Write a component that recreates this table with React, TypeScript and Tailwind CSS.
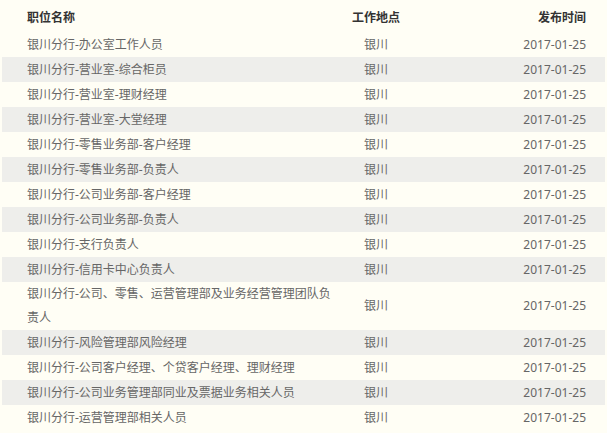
import React from "react";

const rows: string[] = [
  "银川分行-办公室工作人员",
  "银川分行-营业室-综合柜员",
  "银川分行-营业室-理财经理",
  "银川分行-营业室-大堂经理",
  "银川分行-零售业务部-客户经理",
  "银川分行-零售业务部-负责人",
  "银川分行-公司业务部-客户经理",
  "银川分行-公司业务部-负责人",
  "银川分行-支行负责人",
  "银川分行-信用卡中心负责人",
  "银川分行-公司、零售、运营管理部及业务经营管理团队负责人",
  "银川分行-风险管理部风险经理",
  "银川分行-公司客户经理、个贷客户经理、理财经理",
  "银川分行-公司业务管理部同业及票据业务相关人员",
  "银川分行-运营管理部相关人员",
];

export default function App() {
  return (
    <div
      className="min-h-screen w-[607px] bg-[#fffef5] px-[2px] text-[12px] leading-[24px]"
      style={{ fontFamily: '"Noto Sans", "Noto Sans CJK SC", sans-serif' }}
    >
      <div className="grid grid-cols-[338px_72px_1fr] pt-[6px] pb-[2px] font-bold text-[#333]">
        <div className="pl-[25px]">职位名称</div>
        <div className="text-center whitespace-nowrap">工作地点</div>
        <div className="pr-[19px] text-right">发布时间</div>
      </div>
      {rows.map((name, i) => (
        <div
          key={i}
          className={`grid min-h-[25px] grid-cols-[338px_72px_1fr] items-center text-[#666] ${
            i % 2 === 1 ? "bg-[#eeeeeb]" : ""
          }`}
        >
          <div className="pl-[25px]">{name}</div>
          <div className="text-center">银川</div>
          <div className="pr-[19px] text-right">2017-01-25</div>
        </div>
      ))}
    </div>
  );
}
